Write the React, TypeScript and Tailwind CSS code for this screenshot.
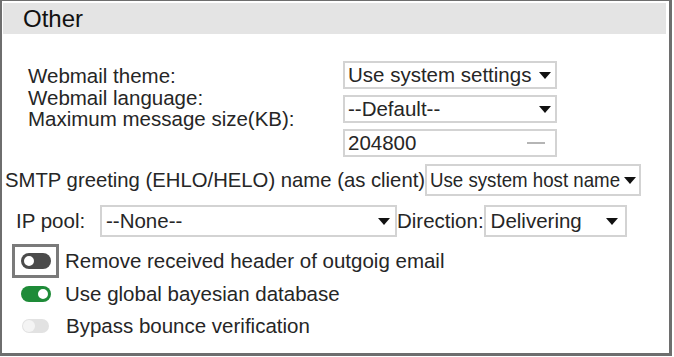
import React from 'react';

const Arrow = () => (
  <svg width="12" height="7" viewBox="0 0 12 7" className="shrink-0">
    <path d="M0 0 L12 0 L6 7 Z" fill="#111" />
  </svg>
);

const SelectBox = ({ value, className, children }: { value?: string; className: string; children?: React.ReactNode }) => (
  <div className={`flex items-center border-2 border-[#d3d3d3] bg-white ${className}`}>
    {children ?? <span className="whitespace-nowrap">{value}</span>}
    <Arrow />
  </div>
);

const Toggle = ({ state }: { state: 'off' | 'on' | 'disabled' }) => {
  if (state === 'on') {
    return (
      <div className="w-[30px] h-[16px] rounded-full bg-[#1e8b38] flex items-center justify-end pr-[1px]">
        <div className="w-[14px] h-[14px] rounded-full bg-white border-2 border-[#1e8b38]" />
      </div>
    );
  }
  if (state === 'disabled') {
    return (
      <div className="w-[27px] h-[14px] rounded-full bg-[#e2e2e2] flex items-center pl-[1px]">
        <div className="w-[12px] h-[12px] rounded-full bg-[#f4f4f4]" />
      </div>
    );
  }
  return (
    <div className="w-[30px] h-[16px] rounded-full bg-[#4b4b4b] flex items-center pl-[1px]">
      <div className="w-[14px] h-[14px] rounded-full bg-white border-2 border-[#4b4b4b]" />
    </div>
  );
};

export default function App() {
  return (
    <div className="w-[674px] h-[357px] bg-white font-['Liberation_Sans',Arial,sans-serif] text-[#262626]">
      <div className="w-[672px] h-[356px] border-l-2 border-r-[3px] border-t border-b-[3px] border-[#6e6e6e] flex flex-col">
        {/* section header */}
        <div className="ml-[1px] mr-[3px] mt-[2px] h-[31px] bg-[#e4e4e4] pl-[20px] flex items-center text-[24px] text-[#111]">
          Other
        </div>

        {/* webmail settings */}
        <div className="flex mt-[27px]">
          <div className="ml-[26px] w-[315px] pt-[4px] text-[20.5px] leading-[21.5px]">
            <div>Webmail theme:</div>
            <div>Webmail language:</div>
            <div>Maximum message size(KB):</div>
          </div>
          <div className="flex flex-col gap-[6px] text-[20.5px]">
            <SelectBox value="Use system settings" className="w-[214px] h-[28px] pl-[3px] pr-[4px] justify-between" />
            <SelectBox value="--Default--" className="w-[214px] h-[28px] pl-[3px] pr-[4px] justify-between" />
            <div className="w-[214px] h-[28px] border-2 border-[#d3d3d3] flex items-center justify-between pl-[3px] pr-[10px]">
              <span>204800</span>
              <div className="w-[18px] h-[2px] bg-[#b5b5b5]" />
            </div>
          </div>
        </div>

        {/* SMTP greeting */}
        <div className="flex items-center mt-[7px] ml-[3px] text-[20.3px]">
          <span className="whitespace-nowrap">SMTP greeting (EHLO/HELO) name (as client)</span>
          <SelectBox className="w-[216px] h-[32px] pl-[3px] pr-[3px] justify-between">
            <span className="w-[192px] whitespace-nowrap text-[21px]">
              <span className="inline-block origin-left scale-x-[0.89]">Use system host name</span>
            </span>
          </SelectBox>
        </div>

        {/* IP pool / direction */}
        <div className="flex items-center mt-[9px] ml-[14px] text-[20.5px]">
          <span className="w-[84px]">IP pool:</span>
          <SelectBox value="--None--" className="w-[297px] h-[32px] pl-[4px] pr-[5px] justify-between" />
          <span className="whitespace-nowrap">Direction:</span>
          <SelectBox value="Delivering" className="w-[143px] h-[32px] pl-[5px] pr-[7px] justify-between" />
        </div>

        {/* toggles */}
        <div className="flex flex-col mt-[7px] text-[20.5px]">
          <div className="flex items-center h-[34px]">
            <div className="ml-[10px] w-[47px] h-[34px] border-[3px] border-[#7a7a7a] flex items-center justify-center">
              <Toggle state="off" />
            </div>
            <span className="ml-[6px]">Remove received header of outgoig email</span>
          </div>
          <div className="flex items-center h-[32px]">
            <div className="ml-[19px]">
              <Toggle state="on" />
            </div>
            <span className="ml-[14px]">Use global bayesian database</span>
          </div>
          <div className="flex items-center h-[32px]">
            <div className="ml-[20px] mr-[3px]">
              <Toggle state="disabled" />
            </div>
            <span className="ml-[14px]">Bypass bounce verification</span>
          </div>
        </div>
      </div>
    </div>
  );
}
